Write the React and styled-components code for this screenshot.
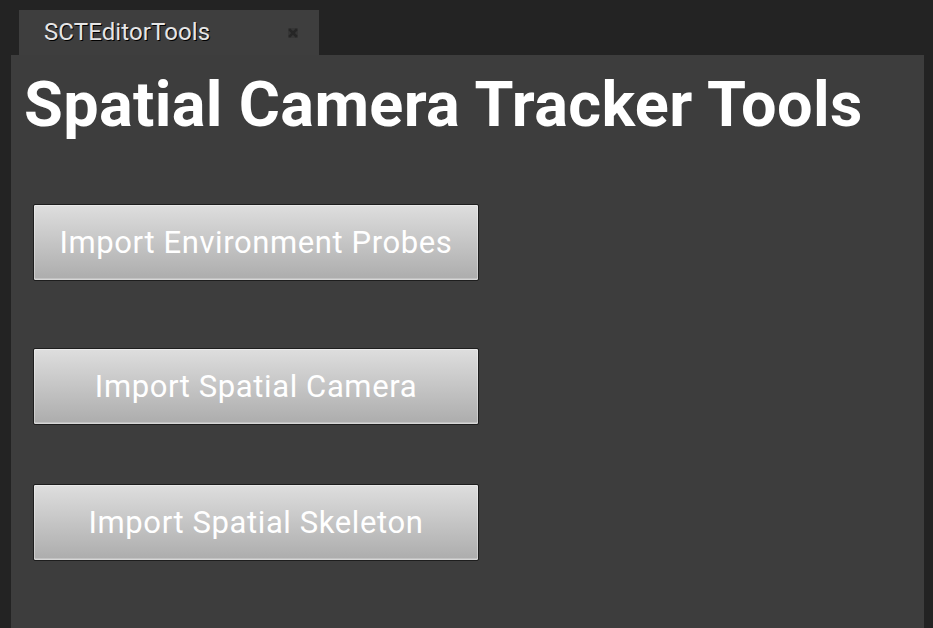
import React from "react";
import styled, { createGlobalStyle } from "styled-components";

const GlobalStyle = createGlobalStyle`
  html, body {
    margin: 0;
    padding: 0;
    background: #232323;
    font-family: Roboto, "Liberation Sans", sans-serif;
  }
`;

const Window = styled.div`
  width: 933px;
  height: 628px;
  display: flex;
  flex-direction: column;
  padding-top: 10px;
  box-sizing: border-box;
  background: #232323;
  overflow: hidden;
`;

const TabBar = styled.div`
  display: flex;
  padding-left: 19px;
  height: 45px;
`;

const Tab = styled.div`
  width: 300px;
  background: #3e3e3e;
  display: flex;
  align-items: center;
  justify-content: space-between;
  padding: 0 20px 0 25px;
  box-sizing: border-box;
`;

const TabLabel = styled.span`
  color: #e6e6e6;
  font-size: 24px;
  text-shadow: 1px 1px 0 #000;
  letter-spacing: 0.1px;
  margin-top: -2px;
`;

const CloseGlyph = styled.svg`
  width: 12px;
  height: 12px;
`;

const Panel = styled.div`
  flex: 1;
  margin: 0 9px 0 11px;
  background: #3d3d3d;
  display: flex;
  flex-direction: column;
  padding: 12px 0 0 13px;
`;

const Title = styled.h1`
  margin: 0;
  color: #ffffff;
  font-size: 63px;
  font-weight: 700;
  line-height: 76px;
  letter-spacing: 0.35px;
`;

const ButtonList = styled.div`
  display: flex;
  flex-direction: column;
  padding-left: 9px;
  margin-top: 61px;
`;

const ToolButton = styled.button`
  width: 446px;
  height: 77px;
  margin-top: ${(props) => props.gap || 0}px;
  border: 1px solid #1e1e1e;
  border-radius: 2px;
  background: linear-gradient(#dedede, #acacac);
  box-shadow: inset 0 0 0 1px rgba(255, 255, 255, 0.35),
    inset 0 -2px 0 rgba(255, 255, 255, 0.25);
  color: #ffffff;
  font-family: Roboto, "Liberation Sans", sans-serif;
  font-size: 31px;
  letter-spacing: 0.6px;
  padding: 0;
  cursor: pointer;
`;

const buttons = [
  { label: "Import Environment Probes", gap: 0 },
  { label: "Import Spatial Camera", gap: 67 },
  { label: "Import Spatial Skeleton", gap: 59 },
];

const App = () => {
  return (
    <Window>
      <GlobalStyle />
      <TabBar>
        <Tab>
          <TabLabel>SCTEditorTools</TabLabel>
          <CloseGlyph viewBox="0 0 12 12">
            <rect x="1" y="1" width="10" height="10" fill="#363636" />
            <path
              d="M3 3 L9 9 M9 3 L3 9"
              stroke="#262626"
              strokeWidth="2.5"
              strokeLinecap="square"
            />
          </CloseGlyph>
        </Tab>
      </TabBar>
      <Panel>
        <Title>Spatial Camera Tracker Tools</Title>
        <ButtonList>
          {buttons.map((b) => (
            <ToolButton key={b.label} gap={b.gap}>
              {b.label}
            </ToolButton>
          ))}
        </ButtonList>
      </Panel>
    </Window>
  );
};

export default App;
